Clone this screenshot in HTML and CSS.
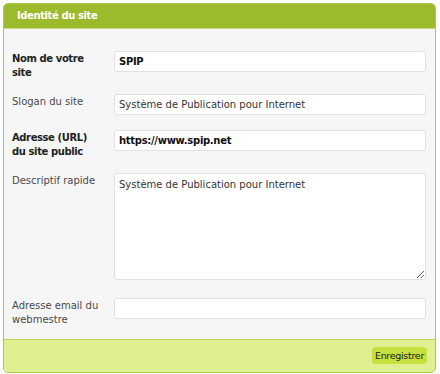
FILE: index.html
```html
<!DOCTYPE html>
<html lang="fr">
  <head>
    <meta charset="UTF-8" />
    <title>Identité du site</title>
    <link rel="stylesheet" href="styles.css">
  </head>
  <body>
    <!-- Configuration box -->
    <div class="formulaire">
      <h3 class="titrem">Identité du site</h3>
      <form class="editer-groupe">
        <div class="editer obligatoire">
          <label for="nom_site">Nom de votre site</label>
          <input type="text" id="nom_site" class="text bold" value="SPIP" />
        </div>
        <div class="editer">
          <label for="slogan_site">Slogan du site</label>
          <input type="text" id="slogan_site" class="text" value="Système de Publication pour Internet" />
        </div>
        <div class="editer obligatoire">
          <label for="adresse_site">Adresse (URL) du site public</label>
          <input type="text" id="adresse_site" class="text bold" value="https://www.spip.net" />
        </div>
        <div class="editer">
          <label for="descriptif_site">Descriptif rapide</label>
          <textarea id="descriptif_site" class="text">Système de Publication pour Internet</textarea>
        </div>
        <div class="editer">
          <label for="email_webmaster">Adresse email du webmestre</label>
          <input type="text" id="email_webmaster" class="text" value="" />
        </div>
      </form>
      <!-- Submit bar -->
      <div class="boutons">
        <button type="submit" class="submit">Enregistrer</button>
      </div>
    </div>
  </body>
</html>
```
FILE: styles.css
```css
/* Global Styles */
* {
  margin: 0;
  padding: 0;
  box-sizing: border-box;
}

body {
  margin: 3px 4px 3px 3px;
  font-family: "DejaVu Sans", sans-serif;
  font-size: 10px;
  color: #333;
  background: #fff;
}

.formulaire {
  border: 1px solid #a9c93f;
  border-radius: 5px;
  background: #f6f6f6;
  overflow: hidden;
}

.titrem {
  background: #9bbb2c;
  color: #fff;
  font-size: 10px;
  font-weight: bold;
  letter-spacing: -0.4px;
  padding: 6px 13px 6px;
  line-height: 12px;
  border-bottom: 1px solid #c9dc8a;
}

.editer-groupe {
  padding: 15px 9px 5px 8px;
}

.editer {
  display: flex;
  align-items: flex-start;
  padding: 7px 0 8px;
}

.editer label {
  width: 102px;
  flex-shrink: 0;
  line-height: 14px;
  margin: 1px 0 -1px;
  padding: 0 14px 0 0;
  color: #4a4a4a;
}

.editer.obligatoire label {
  font-weight: bold;
  letter-spacing: -0.4px;
  color: #222;
}

.text {
  flex: 1;
  height: 21px;
  padding: 2px 4px;
  font-family: inherit;
  font-size: 10px;
  color: #333;
  background: #fff;
  border: 1px solid #e1e1e1;
  border-radius: 3px;
  outline: none;
}

.text.bold {
  font-weight: bold;
  letter-spacing: -0.3px;
  color: #111;
}

textarea.text {
  height: 107px;
  margin-bottom: 3px;
  padding: 4px 4px;
  line-height: 14px;
  resize: vertical;
}

.boutons {
  background: #def08f;
  border-top: 1px solid #b9d54e;
  padding: 7px 8px 7px;
  display: flex;
  justify-content: flex-end;
  height: 33px;
}

.submit {
  font-family: inherit;
  font-size: 9.5px;
  letter-spacing: -0.3px;
  color: #222;
  background: #c5e03f;
  border: none;
  border-radius: 4px;
  padding: 2px 3px;
  height: 17px;
  cursor: pointer;
}
```
